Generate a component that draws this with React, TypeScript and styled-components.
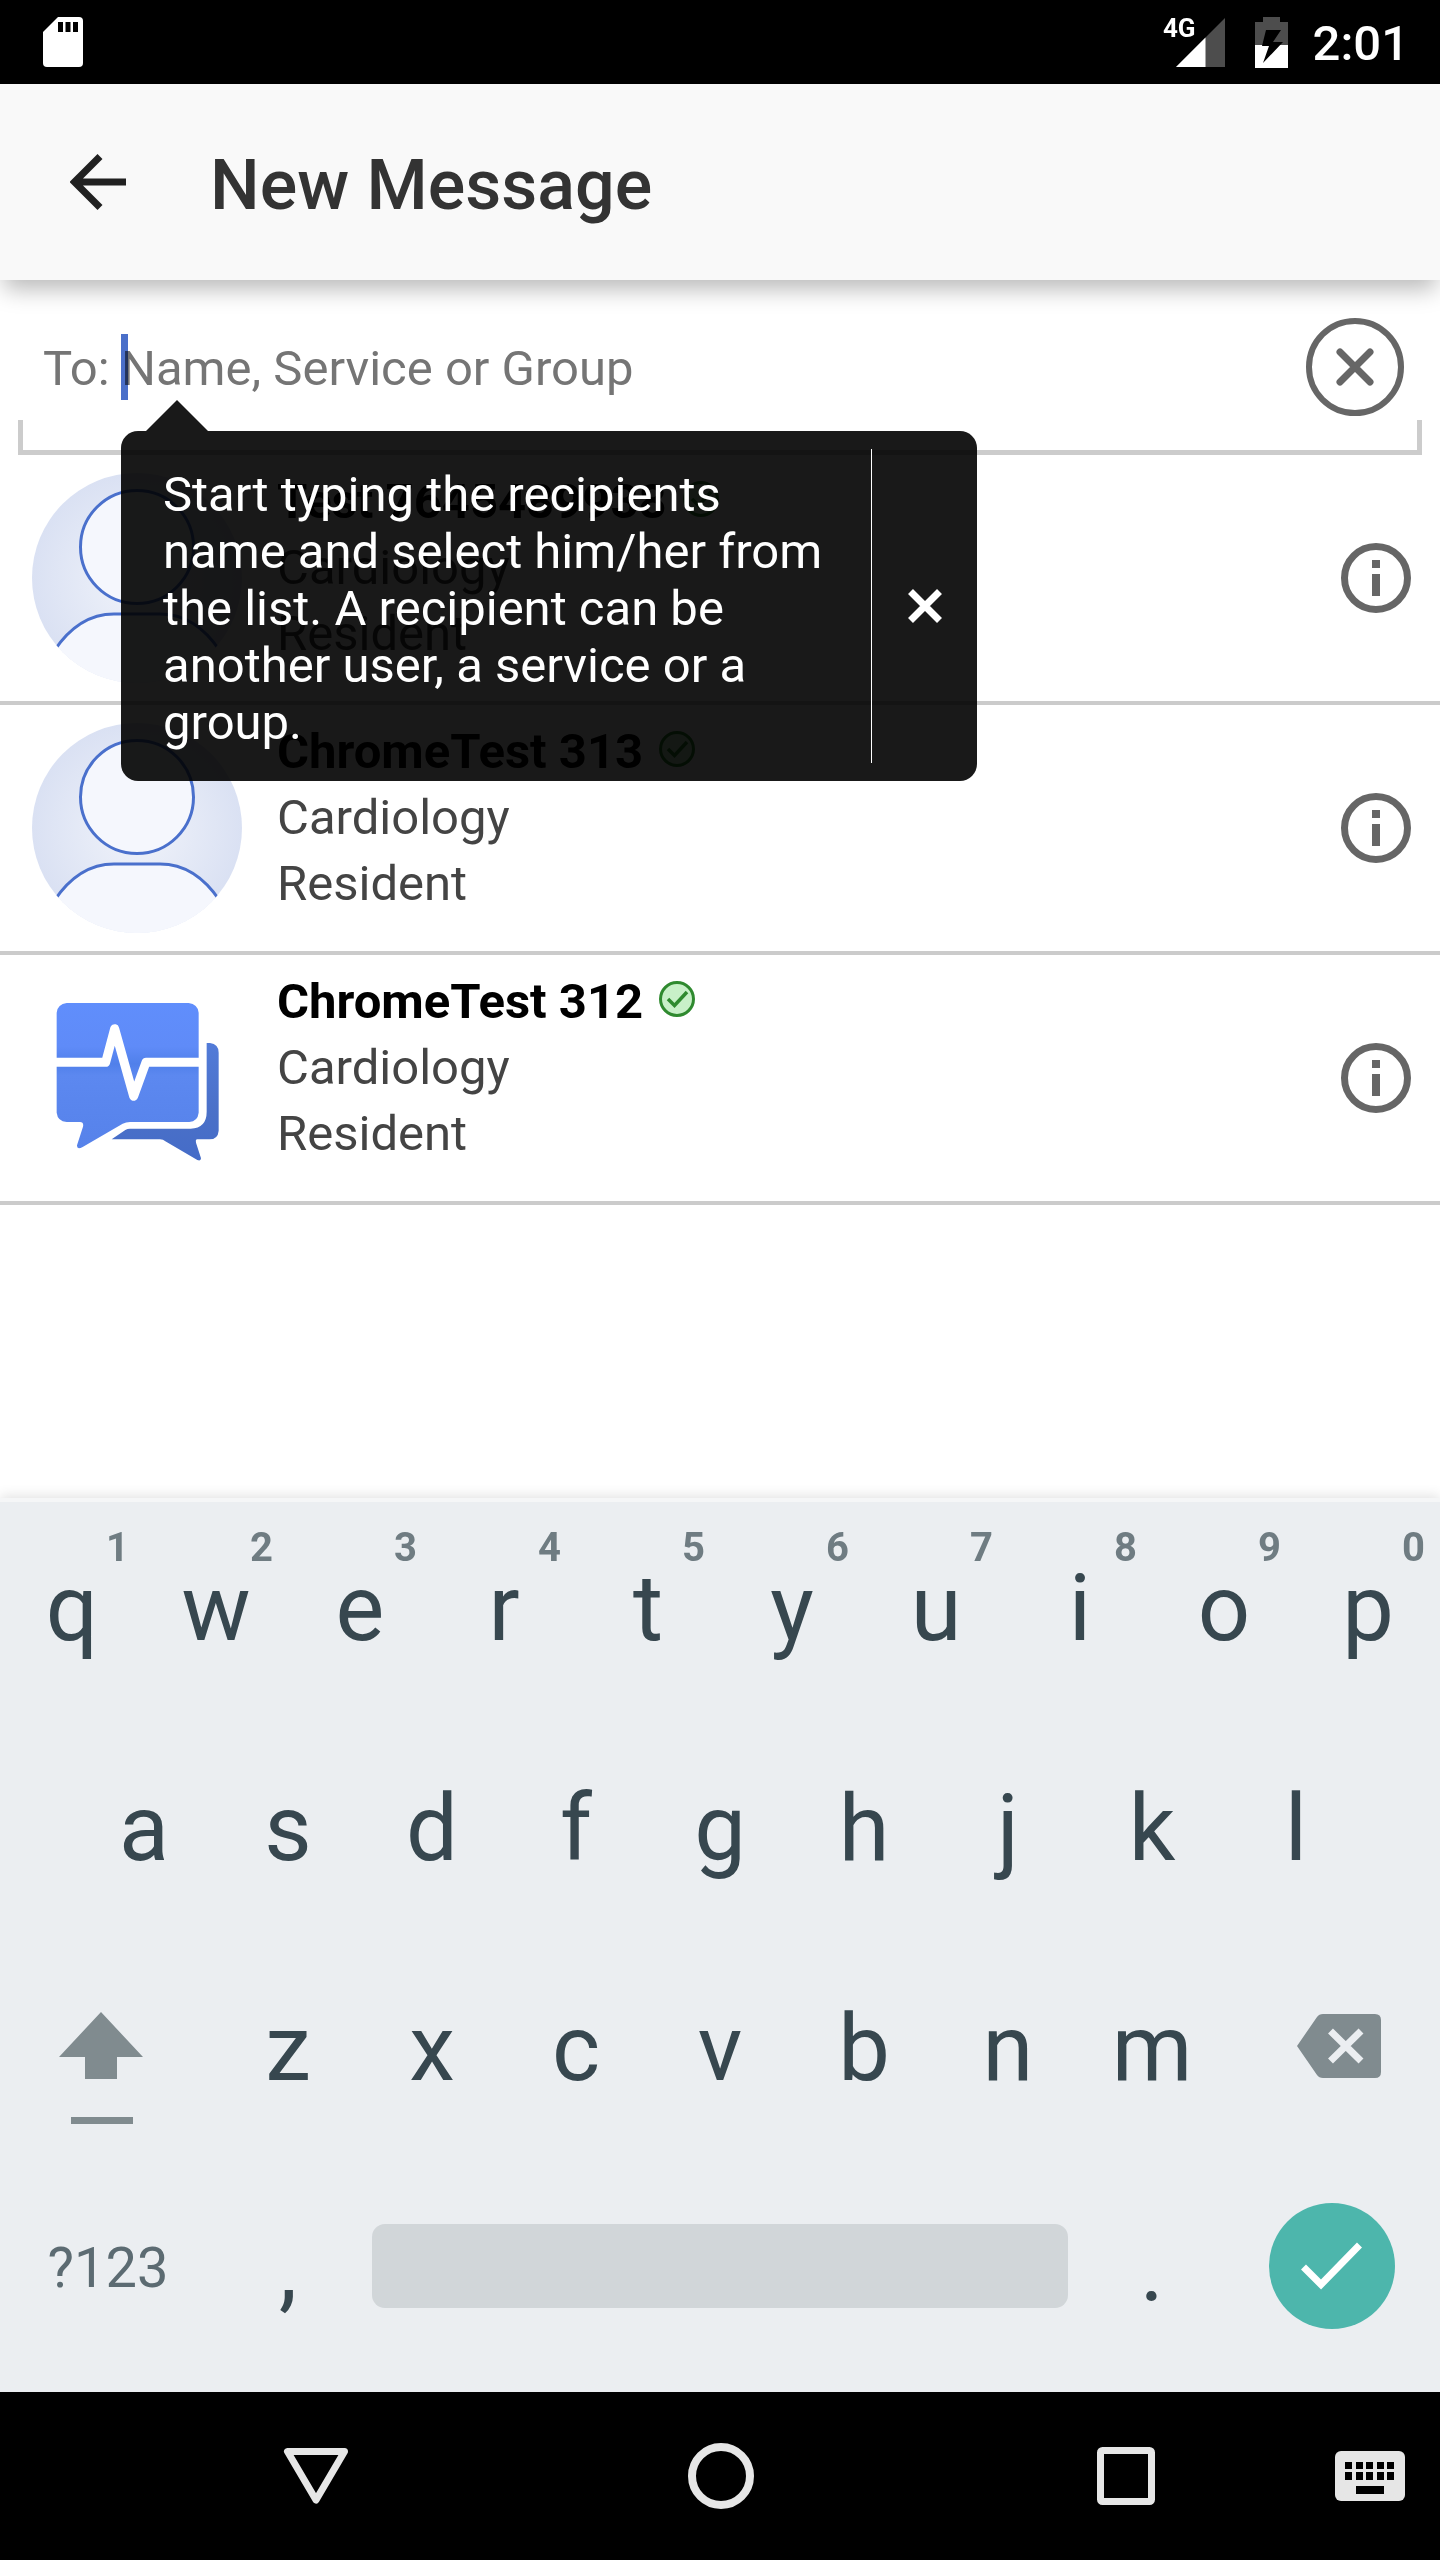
import React from "react";
import styled, { createGlobalStyle } from "styled-components";

const GlobalStyle = createGlobalStyle`
  *, *::before, *::after { box-sizing: border-box; }
  body {
    margin: 0;
    background: #fff;
    font-family: Roboto, "Liberation Sans", sans-serif;
    font-size: 49px;
  }
  svg { display: block; flex: none; }
`;

const Screen = styled.div`
  display: flex;
  flex-direction: column;
  min-height: 100vh;
`;

const PlainButton = styled.button`
  display: flex;
  align-items: center;
  justify-content: center;
  padding: 0;
  border: 0;
  background: none;
  color: inherit;
  font: inherit;
  cursor: pointer;
`;

/* Status bar */

const StatusBar = styled.div`
  display: flex;
  align-items: center;
  justify-content: space-between;
  height: 84px;
  padding: 0 31px 0 43px;
  background: #000;
  color: #fff;
`;

const StatusGroup = styled.div`
  display: flex;
  align-items: center;
`;

const Network = styled.span`
  align-self: flex-start;
  font-size: 26px;
  font-weight: 700;
  line-height: 34px;
  margin-right: -20px;
`;

const BatterySlot = styled.span`
  margin: 0 25px 0 30px;
`;

const Clock = styled.time`
  padding-top: 4px;
  font-size: 49px;
  font-weight: 500;
  line-height: 58px;
`;

/* App bar */

const AppBar = styled.header`
  position: relative;
  z-index: 1;
  display: flex;
  align-items: center;
  gap: 84px;
  height: 196px;
  padding: 0 70px;
  background: #f9f9f9;
  color: #333;
  box-shadow: 0 13px 22px -4px rgba(0, 0, 0, 0.28);
`;

const Title = styled.h1`
  margin: 0;
  padding-top: 6px;
  font-size: 70px;
  font-weight: 500;
  line-height: 84px;
`;

/* Recipient field */

const Recipient = styled.section`
  position: relative;
  display: flex;
  align-items: center;
  height: 174px;
  margin-bottom: 1px;
  padding: 0 36px 0 43px;
  color: #757575;

  &::after {
    content: "";
    position: absolute;
    left: 18px;
    right: 18px;
    bottom: -1px;
    height: 35px;
    border: 5px solid #ccc;
    border-top: 0;
    pointer-events: none;
  }
`;

const FieldLabel = styled.label`
  width: 78px;
  padding-top: 2px;
  white-space: nowrap;
`;

const FieldBox = styled.div`
  position: relative;
  flex: 1;
  display: flex;
`;

const FieldInput = styled.input`
  width: 100%;
  height: 66px;
  padding: 2px 0 0;
  border: 0;
  outline: 0;
  background: none;
  color: #333;
  font: inherit;

  &::placeholder {
    color: #757575;
    opacity: 1;
  }
`;

const Caret = styled.span`
  position: absolute;
  left: 0;
  top: 0;
  width: 7px;
  height: 66px;
  background: #4a6fc9;
  mix-blend-mode: multiply;
`;

const Tooltip = styled.div`
  position: absolute;
  z-index: 2;
  top: 151px;
  left: 121px;
  display: flex;
  width: 856px;
  border-radius: 17px;
  background: rgba(0, 0, 0, 0.9);
  color: #fff;

  &::before {
    content: "";
    position: absolute;
    bottom: 100%;
    left: 25px;
    border: solid transparent;
    border-width: 0 31px 31px;
    border-bottom-color: rgba(0, 0, 0, 0.9);
  }
`;

const TooltipText = styled.p`
  flex: 1;
  margin: 0;
  padding: 35px 36px 30px 42px;
  line-height: 57px;
`;

const TooltipClose = styled(PlainButton)`
  width: 106px;
  margin: 18px 0;
  border-left: 1px solid #fff;
`;

/* Contacts */

const ContactList = styled.ul`
  flex: 1;
  margin: 0;
  padding: 0;
  list-style: none;
`;

const ContactRow = styled.li`
  display: flex;
  align-items: center;
  gap: 35px;
  height: 250px;
  padding: 0 28px 0 32px;
  border-bottom: 4px solid #cbcbcb;
`;

const ContactText = styled.div`
  flex: 1;
  align-self: flex-start;
  padding-top: 14px;
  color: #444;
  line-height: 66px;
`;

const ContactName = styled.div`
  display: flex;
  align-items: center;
  gap: 16px;
  color: #000;
  font-weight: 700;

  svg {
    margin-bottom: 6px;
  }
`;

/* Keyboard */

const Keyboard = styled.section`
  padding-bottom: 14px;
  background: #ebeef1;
  color: #37474f;
  box-shadow: inset 0 4px #f5f6f7, 0 -2px 12px rgba(0, 0, 0, 0.12);
`;

const KeyRow = styled.div<{ $inset?: boolean }>`
  display: flex;
  height: 220px;
  padding: 0 ${(p) => (p.$inset ? "5%" : "0")};
`;

const Key = styled(PlainButton)<{ $span?: number }>`
  position: relative;
  flex: ${(p) => p.$span ?? 2} 1 0;
  min-width: 0;
  font-size: 92px;
`;

const SmallKey = styled(Key)`
  color: #5c6b72;
  font-size: 56px;
`;

const ShiftKey = styled(Key)`
  svg {
    margin: 42px 14px 0 0;
  }
`;

const DeleteKey = styled(Key)`
  svg {
    margin: 0 0 4px 14px;
  }
`;

const KeyHint = styled.span`
  position: absolute;
  top: 26px;
  right: 15px;
  color: #6f7c82;
  font-size: 40px;
  font-weight: 700;
  line-height: 48px;
`;

const SpaceBar = styled.span`
  width: 100%;
  height: 84px;
  margin: 0 12px 4px;
  border-radius: 13px;
  background: #d1d6d9;
`;

const EnterDisc = styled.span`
  display: flex;
  align-items: center;
  justify-content: center;
  width: 126px;
  height: 126px;
  margin-bottom: 4px;
  border-radius: 50%;
  background: #4db6ac;
`;

/* Navigation bar */

const NavBar = styled.nav`
  display: grid;
  grid-template-columns: 113fr 405fr 405fr 405fr 112fr;
  height: 168px;
  background: #000;
`;

const NavButton = styled(PlainButton)<{ $column: number }>`
  grid-column: ${(p) => p.$column};
`;

const ImeButton = styled(NavButton)`
  padding-right: 28px;
`;

const SdCardIcon = () => (
  <svg width="40" height="50" viewBox="0 0 40 50" aria-hidden="true">
    <path d="M15 0H36Q40 0 40 4V46Q40 50 36 50H4Q0 50 0 46V15Z" fill="#fff" />
    <path d="M15 5h5v10h-5zM22.500 5h5v10h-5zM30 5h5v10h-5z" fill="#000" />
  </svg>
);

const SignalIcon = () => (
  <svg width="49" height="49" viewBox="0 0 49 49" aria-hidden="true">
    <path d="M49 0V49H0Z" fill="#4d4d4d" />
    <path d="M29.500 19.500V49H0Z" fill="#fff" />
  </svg>
);

const BatteryIcon = () => (
  <svg width="33" height="51" viewBox="0 0 33 51" aria-hidden="true">
    <path d="M8 0H25V5H33V28H0V5H8Z" fill="#4d4d4d" />
    <path d="M0 28H33V51H0Z" fill="#fff" />
    <path d="M11 13H26L18 25H28L8 46L14 29H7Z" fill="#000" />
  </svg>
);

const BackIcon = () => (
  <svg width="56" height="56" viewBox="0 0 56 56" aria-hidden="true">
    <path d="M56 28H6M30 2.500L4.500 28L30 53.500" fill="none" stroke="#212121" strokeWidth="7" />
  </svg>
);

const ClearIcon = () => (
  <svg width="98" height="98" viewBox="0 0 98 98" fill="none" stroke="#666" aria-hidden="true">
    <circle cx="49" cy="49" r="46" strokeWidth="6" />
    <path d="M34 34L64 64M64 34L34 64" strokeWidth="7" strokeLinecap="round" />
  </svg>
);

const DismissIcon = () => (
  <svg width="34" height="34" viewBox="0 0 34 34" aria-hidden="true">
    <path d="M2.500 2.500L31.500 31.500M31.500 2.500L2.500 31.500" stroke="#fff" strokeWidth="7" />
  </svg>
);

const InfoIcon = () => (
  <svg width="72" height="72" viewBox="0 0 72 72" aria-hidden="true">
    <circle cx="36" cy="36" r="31.500" fill="none" stroke="#666" strokeWidth="7" />
    <path d="M32 18h8v8h-8zM32 32h8v22h-8z" fill="#666" />
  </svg>
);

const VerifiedIcon = () => (
  <svg width="36" height="36" viewBox="0 0 36 36" fill="none" stroke="#2f8a2f" aria-hidden="true">
    <circle cx="18" cy="18" r="16.500" fill="#c8f0c8" strokeWidth="3" />
    <path d="M9 18L15.500 24.500L28 11" strokeWidth="3.500" />
  </svg>
);

const PersonAvatar = () => (
  <svg width="210" height="210" viewBox="0 0 210 210" aria-hidden="true">
    <defs>
      <radialGradient id="avatarShade">
        <stop offset="0.3" stopColor="#eaeef8" />
        <stop offset="1" stopColor="#dae1f3" />
      </radialGradient>
      <clipPath id="avatarClip">
        <circle cx="105" cy="105" r="105" />
      </clipPath>
    </defs>
    <g clipPath="url(#avatarClip)">
      <rect width="210" height="210" fill="url(#avatarShade)" />
      <g fill="#f5f7fd" stroke="#4a70cc" strokeWidth="3">
        <circle cx="105" cy="74" r="56.500" />
        <path d="M22 178C38 154 58 141 82 141H128C152 141 172 154 188 178V230H22Z" />
      </g>
      <path d="M0 176H210V210H0Z" fill="#f5f7fd" />
    </g>
  </svg>
);

const PulseLogo = () => (
  <svg width="210" height="210" viewBox="36 39 630 630" aria-hidden="true">
    <defs>
      <linearGradient id="logoFront" x1="0" y1="0" x2="0" y2="1">
        <stop offset="0" stopColor="#608efc" />
        <stop offset="0.3" stopColor="#5f8bf8" />
        <stop offset="0.42" stopColor="#5080ea" />
        <stop offset="0.5" stopColor="#5c88f0" />
        <stop offset="1" stopColor="#5682ea" />
      </linearGradient>
      <linearGradient id="logoBack" x1="0" y1="0" x2="0" y2="1">
        <stop offset="0" stopColor="#527bd8" />
        <stop offset="0.6" stopColor="#4a70c8" />
        <stop offset="1" stopColor="#456cc8" />
      </linearGradient>
    </defs>
    <path
      d="M560 249H570Q596 252 596 278V512Q594 538 568 538H530Q526 541 528 548L543 595Q543 604 532 600L436 544Q430 538 420 538H275L316 510Q322 506 330 506H512Q560 504 560 455Z"
      fill="url(#logoBack)"
    />
    <path
      d="M140 129H506Q533 132 536 158V458Q533 484 508 486H330Q318 486 308 491L188 561Q170 570 171 556L189 500Q192 486 180 486H140Q113 484 110 458V158Q113 132 140 129Z"
      fill="url(#logoFront)"
    />
    <path
      d="M106 307H257L284 206L341 409L378 307H540"
      fill="none"
      stroke="#fff"
      strokeWidth="27"
      strokeLinejoin="round"
    />
  </svg>
);

const ShiftIcon = () => (
  <svg width="84" height="114" viewBox="0 0 84 114" fill="#808b8f" aria-hidden="true">
    <path d="M42 0L84 45H58V67H26V45H0Z" />
    <path d="M12 105H74V112H12Z" />
  </svg>
);

const DeleteIcon = () => (
  <svg width="84" height="64" viewBox="0 0 84 64" aria-hidden="true">
    <path d="M26 0H78Q84 0 84 6V58Q84 64 78 64H26Q22 64 20 61L0 32L20 3Q22 0 26 0Z" fill="#808b8f" />
    <path d="M33.500 17L64 47M64 17L33.500 47" stroke="#ebeef1" strokeWidth="7" />
  </svg>
);

const CheckIcon = () => (
  <svg width="62" height="48" viewBox="0 0 62 48" aria-hidden="true">
    <path d="M2.500 25L20 42.500L58.500 3" fill="none" stroke="#fff" strokeWidth="7" />
  </svg>
);

const NavBackIcon = () => (
  <svg width="66" height="58" viewBox="0 0 66 58" aria-hidden="true">
    <path d="M4.500 4.500H61.500L33 53Z" fill="none" stroke="#e6e6e6" strokeWidth="7" strokeLinejoin="round" />
  </svg>
);

const NavHomeIcon = () => (
  <svg width="66" height="66" viewBox="0 0 66 66" aria-hidden="true">
    <circle cx="33" cy="33" r="29" fill="none" stroke="#e6e6e6" strokeWidth="8" />
  </svg>
);

const NavRecentIcon = () => (
  <svg width="58" height="58" viewBox="0 0 58 58" aria-hidden="true">
    <rect x="3.500" y="3.500" width="51" height="51" rx="2" fill="none" stroke="#e6e6e6" strokeWidth="7" />
  </svg>
);

const columns = [10, 21, 31, 42, 52];

const ImeIcon = () => (
  <svg width="70" height="50" viewBox="0 0 70 50" aria-hidden="true">
    <rect width="70" height="50" rx="6" fill="#e6e6e6" />
    {columns.map((x) => (
      <path key={x} d={`M${x} 11h7v7h-7zM${x} 21h7v8h-7z`} fill="#000" />
    ))}
    <path d="M21 35h28v8H21z" fill="#000" />
  </svg>
);

const contacts = [
  { name: "Test 7645489938", department: "Cardiology", role: "Resident", logo: false },
  { name: "ChromeTest 313", department: "Cardiology", role: "Resident", logo: false },
  { name: "ChromeTest 312", department: "Cardiology", role: "Resident", logo: true },
];

const topKeys = "qwertyuiop".split("");

export default function App() {
  return (
    <Screen>
      <GlobalStyle />
      <StatusBar>
        <SdCardIcon />
        <StatusGroup>
          <Network>4G</Network>
          <SignalIcon />
          <BatterySlot>
            <BatteryIcon />
          </BatterySlot>
          <Clock>2:01</Clock>
        </StatusGroup>
      </StatusBar>

      <AppBar>
        <PlainButton type="button" aria-label="Back">
          <BackIcon />
        </PlainButton>
        <Title>New Message</Title>
      </AppBar>

      <Recipient>
        <FieldLabel htmlFor="recipient">To:</FieldLabel>
        <FieldBox>
          <FieldInput id="recipient" type="text" placeholder="Name, Service or Group" />
          <Caret />
        </FieldBox>
        <PlainButton type="button" aria-label="Clear recipient">
          <ClearIcon />
        </PlainButton>
        <Tooltip role="note">
          <TooltipText>
            Start typing the recipients name and select him/her from the list. A recipient can be another user, a
            service or a group.
          </TooltipText>
          <TooltipClose type="button" aria-label="Dismiss tip">
            <DismissIcon />
          </TooltipClose>
        </Tooltip>
      </Recipient>

      <ContactList>
        {contacts.map((contact) => (
          <ContactRow key={contact.name}>
            {contact.logo ? <PulseLogo /> : <PersonAvatar />}
            <ContactText>
              <ContactName>
                {contact.name}
                <VerifiedIcon />
              </ContactName>
              <div>{contact.department}</div>
              <div>{contact.role}</div>
            </ContactText>
            <PlainButton type="button" aria-label={`About ${contact.name}`}>
              <InfoIcon />
            </PlainButton>
          </ContactRow>
        ))}
      </ContactList>

      <Keyboard>
        <KeyRow>
          {topKeys.map((letter, index) => (
            <Key key={letter} type="button">
              {letter}
              <KeyHint>{(index + 1) % 10}</KeyHint>
            </Key>
          ))}
        </KeyRow>
        <KeyRow $inset>
          {"asdfghjkl".split("").map((letter) => (
            <Key key={letter} type="button">
              {letter}
            </Key>
          ))}
        </KeyRow>
        <KeyRow>
          <ShiftKey type="button" $span={3} aria-label="Shift">
            <ShiftIcon />
          </ShiftKey>
          {"zxcvbnm".split("").map((letter) => (
            <Key key={letter} type="button">
              {letter}
            </Key>
          ))}
          <DeleteKey type="button" $span={3} aria-label="Delete">
            <DeleteIcon />
          </DeleteKey>
        </KeyRow>
        <KeyRow>
          <SmallKey type="button" $span={3}>
            ?123
          </SmallKey>
          <Key type="button">,</Key>
          <Key type="button" $span={10} aria-label="Space">
            <SpaceBar />
          </Key>
          <Key type="button">.</Key>
          <Key type="button" $span={3} aria-label="Done">
            <EnterDisc>
              <CheckIcon />
            </EnterDisc>
          </Key>
        </KeyRow>
      </Keyboard>

      <NavBar>
        <NavButton type="button" $column={2} aria-label="Back">
          <NavBackIcon />
        </NavButton>
        <NavButton type="button" $column={3} aria-label="Home">
          <NavHomeIcon />
        </NavButton>
        <NavButton type="button" $column={4} aria-label="Recent apps">
          <NavRecentIcon />
        </NavButton>
        <ImeButton type="button" $column={5} aria-label="Switch keyboard">
          <ImeIcon />
        </ImeButton>
      </NavBar>
    </Screen>
  );
}
